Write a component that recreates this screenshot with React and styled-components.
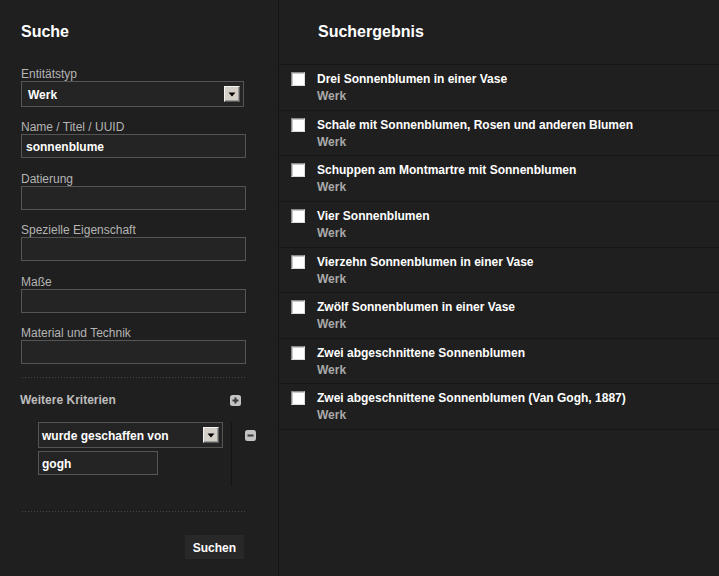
import React from 'react';
import styled, { createGlobalStyle } from 'styled-components';

const Global = createGlobalStyle`
  html, body { margin: 0; padding: 0; background: #1f1f1f; }
  body {
    font-family: "Liberation Sans", Arial, sans-serif;
    font-size: 12px;
    color: #fff;
  }
`;

const Page = styled.div`
  display: flex;
  width: 719px;
  height: 576px;
  background: #1f1f1f;
  overflow: hidden;
`;

const Sidebar = styled.aside`
  width: 279px;
  flex: none;
  box-sizing: border-box;
  border-right: 1px solid #141414;
  padding: 22px 0 0 21px;
  display: flex;
  flex-direction: column;
`;

const Heading = styled.h1`
  margin: 0 0 ${p => p.$mb}px 0;
  padding: 1px 0 0 ${p => p.$pl || 0}px;
  height: 18px;
  font-size: 16px;
  line-height: 18px;
  font-weight: bold;
  color: #fff;
`;

const Field = styled.div`
  display: flex;
  flex-direction: column;
  margin-bottom: ${p => p.$mb}px;
`;

const Label = styled.label`
  display: block;
  height: 14px;
  padding-top: 1px;
  line-height: 14px;
  color: #b4b4b4;
`;

const SelectBox = styled.div`
  box-sizing: border-box;
  width: ${p => p.$w}px;
  height: 26px;
  border: 1px solid #555;
  background: #242424;
  display: flex;
  align-items: center;
  justify-content: space-between;
  padding: 0 3px 0 ${p => p.$pl}px;
  font-weight: bold;
  color: #fff;
`;

const SelectValue = styled.span`
  padding-top: 2px;
`;

const ArrowButton = styled.span`
  box-sizing: border-box;
  width: 16px;
  height: 16px;
  background: #d4d0c8;
  border: 1px solid;
  border-color: #f4f4f4 #5a5a5a #5a5a5a #f4f4f4;
  box-shadow: inset -1px -1px 0 #9a9a9a;
  display: flex;
  align-items: center;
  justify-content: center;
`;

const TextInput = styled.div`
  box-sizing: border-box;
  width: ${p => p.$w}px;
  height: 24px;
  border: 1px solid #555;
  background: #242424;
  padding: 2px 0 0 ${p => p.$pl || 4}px;
  display: flex;
  align-items: center;
  font-weight: bold;
  color: #fff;
`;

const Dotted = styled.div`
  width: 223px;
  height: 1px;
  margin: ${p => p.$mt}px 0 0 1px;
  background-image: repeating-linear-gradient(to right, #474747 0 1px, transparent 1px 3px);
`;

const CriteriaHeader = styled.div`
  display: flex;
  align-items: center;
  justify-content: space-between;
  width: 221px;
  height: 14px;
  margin: 14px 0 0 -1px;
  padding-top: 1px;
  line-height: 14px;
  font-weight: bold;
  color: #bdbdbd;
`;

const IconBox = styled.span`
  display: flex;
  margin-top: ${p => p.$mt || 0}px;
`;

const Criterion = styled.div`
  display: flex;
  margin: 15px 0 0 17px;
`;

const CriterionFields = styled.div`
  display: flex;
  flex-direction: column;
  gap: 3px;
  padding-bottom: 11px;
`;

const VLine = styled.div`
  width: 1px;
  background: #141414;
  margin: 0 13px 0 8px;
`;

const Footer = styled.div`
  display: flex;
  justify-content: flex-end;
  width: 223px;
  margin-top: 23px;
`;

const Button = styled.button`
  height: 24px;
  padding: 2px 8px 0;
  border: none;
  background: #282828;
  color: #fff;
  font-family: inherit;
  font-size: 12px;
  font-weight: bold;
`;

const Results = styled.main`
  flex: 1;
  display: flex;
  flex-direction: column;
  padding-top: 22px;
`;

const List = styled.div`
  border-bottom: 1px solid #171717;
`;

const Row = styled.div`
  box-sizing: border-box;
  height: 45.625px;
  border-top: 1px solid #171717;
  display: flex;
  padding: 6px 0 0 12px;
`;

const Check = styled.span`
  box-sizing: border-box;
  flex: none;
  width: 14px;
  height: 14px;
  margin: 1px 12px 0 0;
  background: #fff;
  border: 1px solid;
  border-color: #8a8a8a #dcdcdc #dcdcdc #8a8a8a;
  box-shadow: inset 1px 1px 0 #c8c8c8;
`;

const RowText = styled.div`
  display: flex;
  flex-direction: column;
  gap: 3px;
  padding-top: 1px;
  line-height: 14px;
  font-weight: bold;
`;

const Title = styled.span`
  color: #fff;
`;

const Kind = styled.span`
  color: #a9a9a9;
`;

const Arrow = () => (
  <svg width="8" height="5" viewBox="0 0 8 5"><path d="M0.5 0.5h7L4 4.5z" fill="#000" /></svg>
);

const PlusMinus = ({ plus }) => (
  <svg width="11" height="11" viewBox="0 0 11 11">
    <rect x="0" y="0" width="11" height="11" rx="2.5" fill="#c4c4c4" />
    <rect x="2.5" y="4.5" width="6" height="2" fill="#3a3a3a" />
    {plus && <rect x="4.5" y="2.5" width="2" height="6" fill="#3a3a3a" />}
  </svg>
);

const results = [
  'Drei Sonnenblumen in einer Vase',
  'Schale mit Sonnenblumen, Rosen und anderen Blumen',
  'Schuppen am Montmartre mit Sonnenblumen',
  'Vier Sonnenblumen',
  'Vierzehn Sonnenblumen in einer Vase',
  'Zwölf Sonnenblumen in einer Vase',
  'Zwei abgeschnittene Sonnenblumen',
  'Zwei abgeschnittene Sonnenblumen (Van Gogh, 1887)',
];

const textFields = [
  { label: 'Name / Titel / UUID', value: 'sonnenblume' },
  { label: 'Datierung', value: '' },
  { label: 'Spezielle Eigenschaft', value: '' },
  { label: 'Maße', value: '' },
  { label: 'Material und Technik', value: '' },
];

export default function App() {
  return (
    <Page>
      <Global />
      <Sidebar>
        <Heading $mb={25}>Suche</Heading>
        <Field $mb={12}>
          <Label>Entitätstyp</Label>
          <SelectBox $w={223} $pl={6}>
            <SelectValue>Werk</SelectValue>
            <ArrowButton><Arrow /></ArrowButton>
          </SelectBox>
        </Field>
        {textFields.map((f, i) => (
          <Field key={f.label} $mb={i === textFields.length - 1 ? 0 : 12.5}>
            <Label>{f.label}</Label>
            <TextInput $w={225}>{f.value}</TextInput>
          </Field>
        ))}
        <Dotted $mt={13} />
        <CriteriaHeader>
          <span>Weitere Kriterien</span>
          <IconBox $mt={1}><PlusMinus plus /></IconBox>
        </CriteriaHeader>
        <Criterion>
          <CriterionFields>
            <SelectBox $w={185} $pl={3}>
              <SelectValue>wurde geschaffen von</SelectValue>
              <ArrowButton><Arrow /></ArrowButton>
            </SelectBox>
            <TextInput $w={120} $pl={3}>gogh</TextInput>
          </CriterionFields>
          <VLine />
          <IconBox $mt={8}><PlusMinus /></IconBox>
        </Criterion>
        <Dotted $mt={25} />
        <Footer>
          <Button>Suchen</Button>
        </Footer>
      </Sidebar>
      <Results>
        <Heading $mb={23} $pl={39}>Suchergebnis</Heading>
        <List>
          {results.map(r => (
            <Row key={r}>
              <Check />
              <RowText>
                <Title>{r}</Title>
                <Kind>Werk</Kind>
              </RowText>
            </Row>
          ))}
        </List>
      </Results>
    </Page>
  );
}
